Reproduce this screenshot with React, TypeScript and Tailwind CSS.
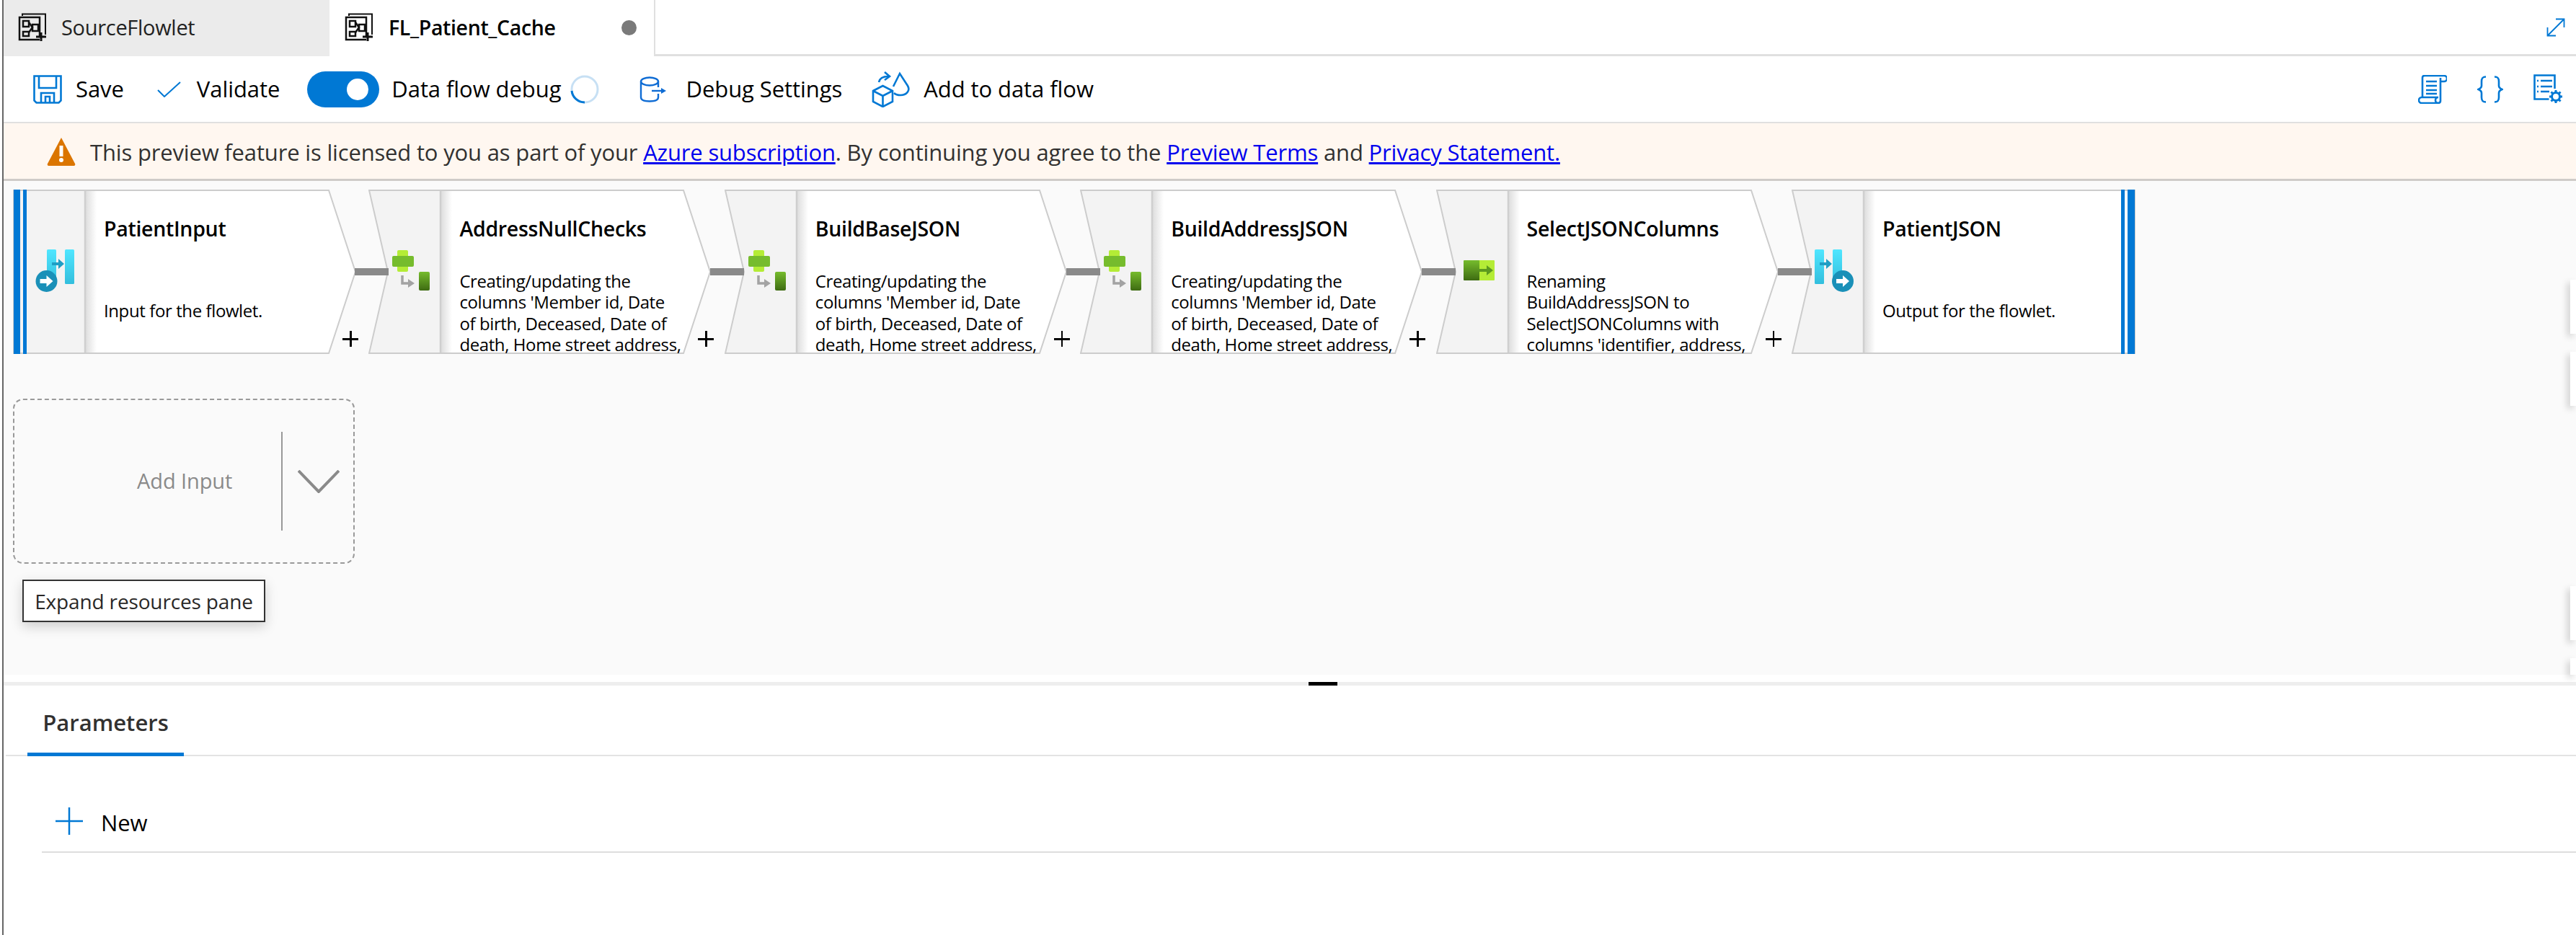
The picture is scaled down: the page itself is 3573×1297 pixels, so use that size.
import type { ReactNode } from 'react'

const NODE_H = 228

type Kind = 'input' | 'derive' | 'select' | 'output'

interface FlowNode {
  title: string
  lines: string[]
  kind: Kind
}

const derivedLines = [
  'Creating/updating the',
  "columns 'Member id, Date",
  'of birth, Deceased, Date of',
  'death, Home street address,',
]

const NODES: FlowNode[] = [
  { title: 'PatientInput', lines: ['Input for the flowlet.'], kind: 'input' },
  { title: 'AddressNullChecks', lines: derivedLines, kind: 'derive' },
  { title: 'BuildBaseJSON', lines: derivedLines, kind: 'derive' },
  { title: 'BuildAddressJSON', lines: derivedLines, kind: 'derive' },
  {
    title: 'SelectJSONColumns',
    lines: ['Renaming', 'BuildAddressJSON to', 'SelectJSONColumns with', "columns 'identifier, address,"],
    kind: 'select',
  },
  { title: 'PatientJSON', lines: ['Output for the flowlet.'], kind: 'output' },
]

function TabIcon() {
  return (
    <svg width="40" height="40" viewBox="0 0 40 40" fill="none" stroke="#111" strokeWidth="2.5" className="shrink-0">
      <path d="M6 4V1.500h32V30" strokeWidth="2" />
      <path d="M30 37H2V6h28v26" />
      <rect x="7" y="11" width="8" height="8" />
      <rect x="7" y="26" width="8" height="6" />
      <rect x="20" y="16" width="8" height="9" />
      <path d="M15 13l5 7-5 7" />
      <path d="M25 33h14M32 27v12" strokeWidth="3" />
    </svg>
  )
}

function SaveIcon() {
  return (
    <svg width="40" height="40" viewBox="0 0 40 40" fill="none" stroke="#0078d4" strokeWidth="2.6">
      <path d="M1.5 1.5h37v34l-3 3h-31l-3-3z" />
      <path d="M8 2v16h24V2" />
      <path d="M11 38V25h18v13M17 38v-8h6v8" />
    </svg>
  )
}

function DebugSettingsIcon() {
  return (
    <svg width="38" height="36" viewBox="0 0 38 36" fill="none" stroke="#0f6cd4" strokeWidth="2.4">
      <ellipse cx="14" cy="7" rx="12" ry="5.5" />
      <path d="M2 7v22c0 3.500 5 5.500 12 5.500S26 32.500 26 29v-5M26 7v8" />
      <path d="M17 20h14" />
      <path d="M30 16l7 4-7 4z" fill="#0f6cd4" stroke="none" />
    </svg>
  )
}

function AddToFlowIcon() {
  return (
    <svg width="54" height="50" viewBox="0 0 54 50" fill="none" stroke="#0078d4" strokeWidth="2.6">
      <path d="M2 27l13.500-7L29 27v15l-13.500 7L2 42z" />
      <path d="M2 27l13.500 7L29 27M15.500 34v15" />
      <path d="M30 21L39 3l11 17c4 7-2 13-10 13-4 0-7-1-9-3" />
      <path d="M10 15c1-5 5-8 13-8" />
      <path d="M18 1l7 6-7 5" />
    </svg>
  )
}

function ScriptIcon() {
  return (
    <svg width="40" height="40" viewBox="0 0 40 40" fill="none" stroke="#0078d4" strokeWidth="2.6">
      <path d="M6 31V4c0-2 1-3 3-3h27a3.500 3.500 0 0 1 0 8h-5" />
      <path d="M31 4v32c0 2-2 3-4 3H5a4 4 0 0 1 0-8h23a4 4 0 0 0 0 8" />
      <path d="M11 9h15M11 15h15M11 21h15M11 26h15" strokeWidth="2.400" />
    </svg>
  )
}

function BracesIcon() {
  return (
    <svg width="36" height="38" viewBox="0 0 36 38" fill="none" stroke="#0078d4" strokeWidth="2.6">
      <path d="M12 1.500C7 1.500 6 4 6 8v6c0 3-2 4-4.500 5C4 20 6 21 6 24v6c0 4 1 6.500 6 6.500" />
      <path d="M24 1.500c5 0 6 2.500 6 6.500v6c0 3 2 4 4.500 5-2.500 1-4.500 2-4.500 5v6c0 4-1 6.500-6 6.500" />
    </svg>
  )
}

function ListGearIcon() {
  return (
    <svg width="41" height="41" viewBox="0 0 41 41" fill="none" stroke="#0078d4" strokeWidth="2.6">
      <path d="M29.500 20V1.500h-28v33h20" />
      <path d="M10 9h16M10 17h16M10 24h12" />
      <path d="M5 9h2M5 17h2M5 24h2" />
      <circle cx="31" cy="31" r="5.500" strokeWidth="3" />
      <path d="M31 22v3M31 37v3M22 31h3M37 31h3M24.500 24.500l2 2M35.500 35.500l2 2M37.500 24.500l-2 2M26.500 35.500l-2 2" strokeWidth="3" />
    </svg>
  )
}

function ExpandIcon() {
  return (
    <svg width="26" height="26" viewBox="0 0 26 26" fill="none" stroke="#0078d4" strokeWidth="1.800">
      <path d="M2 24L24 2M13 1.500h11.500V13M1.500 13v11.500H13" />
    </svg>
  )
}

function WarningIcon() {
  return (
    <svg width="40" height="40" viewBox="0 0 40 40">
      <path d="M20 1L39 37a2 2 0 0 1-2 3H3a2 2 0 0 1-2-3z" fill="#db7500" />
      <rect x="17.500" y="12" width="5" height="15" fill="#fff" />
      <circle cx="20" cy="32" r="3" fill="#fff" />
    </svg>
  )
}

function NodeIcon({ kind }: { kind: Kind }) {
  if (kind === 'derive') {
    return (
      <svg className="absolute left-0 top-0" width="99" height="228" viewBox="0 0 99 228">
        <defs>
          <linearGradient id="derive-bar" x1="0" y1="0" x2="0" y2="1">
            <stop offset="0" stopColor="#76bc2d" />
            <stop offset="1" stopColor="#3e6b12" />
          </linearGradient>
        </defs>
        <rect x="40" y="84" width="15" height="30" rx="2" fill="#b4ec36" />
        <rect x="33" y="92" width="30" height="15" rx="2" fill="#76bc2d" />
        <path d="M47 119v11h10" fill="none" stroke="#a3a3a3" strokeWidth="3.500" />
        <path d="M55 124l9 6-9 6z" fill="#a3a3a3" />
        <rect x="70" y="114" width="15" height="26" rx="2" fill="url(#derive-bar)" />
      </svg>
    )
  }
  if (kind === 'select') {
    return (
      <svg className="absolute left-0 top-0" width="99" height="228" viewBox="0 0 99 228">
        <defs>
          <linearGradient id="select-bar" x1="0" y1="0" x2="0" y2="1">
            <stop offset="0" stopColor="#76bc2d" />
            <stop offset="1" stopColor="#3e6b12" />
          </linearGradient>
        </defs>
        <rect x="58" y="98" width="23" height="28" rx="1" fill="#b4ec36" />
        <rect x="38" y="98" width="22" height="28" rx="1" fill="url(#select-bar)" />
        <path d="M60 110h10v-5l9 7-9 7v-5H60z" fill="#5c9a1f" />
      </svg>
    )
  }
  const out = kind === 'output'
  const cx = out ? 71 : 46.5
  return (
    <svg className="absolute left-0 top-0" width="99" height="228" viewBox="0 0 99 228">
      <defs>
        <linearGradient id={`bar-${kind}`} x1="0" y1="0" x2="0" y2="1">
          <stop offset="0" stopColor="#50e6ff" />
          <stop offset="1" stopColor="#32bedd" />
        </linearGradient>
      </defs>
      <rect x={out ? 32 : 47} y="83" width="13" height="48" rx="1.500" fill={`url(#bar-${kind})`} />
      <rect x={out ? 57 : 72} y="83" width="13" height="48" rx="1.500" fill={`url(#bar-${kind})`} />
      <path
        d={out ? 'M39 101h9v-5l8 7-8 7v-5h-9z' : 'M54 101h9v-5l8 7-8 7v-5h-9z'}
        fill="#1f9ec4"
      />
      <circle cx={cx} cy="127" r="15" fill="#1a90b8" />
      <path
        d={`M${cx - 9} 124h9v-5l9 8-9 8v-5h-9z`}
        fill="#fff"
      />
    </svg>
  )
}

function NodeShape({ kind }: { kind: Kind }) {
  const h = NODE_H
  let white = `100,1 437,1 474,${h / 2} 437,${h - 1} 100,${h - 1}`
  let outline = `1,1 437,1 474,${h / 2} 437,${h - 1} 1,${h - 1} 27,${h / 2}`
  let gray = `1,1 100,1 100,${h - 1} 1,${h - 1} 27,${h / 2}`
  if (kind === 'input') {
    outline = `1,1 438,1 475,${h / 2} 438,${h - 1} 1,${h - 1}`
    white = `100,1 438,1 475,${h / 2} 438,${h - 1} 100,${h - 1}`
    gray = `1,1 100,1 100,${h - 1} 1,${h - 1}`
  }
  if (kind === 'output') {
    outline = `1,1 476,1 476,${h - 1} 1,${h - 1} 27,${h / 2}`
    white = `100,1 476,1 476,${h - 1} 100,${h - 1}`
  }
  return (
    <svg className="absolute left-0 top-0" width="480" height={h} viewBox={`0 0 480 ${h}`}>
      <defs>
        <linearGradient id={`fade-${kind}`} x1="0" y1="0" x2="1" y2="0">
          <stop offset="0" stopColor="#dcdcdc" />
          <stop offset="1" stopColor="#ffffff" />
        </linearGradient>
      </defs>
      <polygon points={white} fill="#fff" />
      <rect x="100" y="2" width="16" height={h - 4} fill={`url(#fade-${kind})`} />
      <polygon points={gray} fill="#f3f3f3" />
      <line x1="100" y1="1" x2="100" y2={h - 1} stroke="#cfcfcf" strokeWidth="2.500" />
      <polygon points={outline} fill="none" stroke="#cccccc" strokeWidth="2" />
    </svg>
  )
}

function PipelineNode({ node, last }: { node: FlowNode; last: boolean }) {
  const oneLine = node.lines.length === 1
  return (
    <div className="relative h-[228px] w-[493.4px] shrink-0 overflow-hidden font-['Open_Sans',sans-serif] text-black">
      <NodeShape kind={node.kind} />
      <NodeIcon kind={node.kind} />
      {node.kind === 'input' && (
        <>
          <div className="absolute left-[1px] top-0 h-full w-[9px] bg-[#0078d4]" />
          <div className="absolute left-[14px] top-0 h-full w-[5px] bg-[#0078d4]" />
        </>
      )}
      {node.kind === 'output' && (
        <>
          <div className="absolute left-[457px] top-0 h-full w-[5px] bg-[#0078d4]" />
          <div className="absolute left-[466px] top-0 h-full w-[10px] bg-[#0078d4]" />
        </>
      )}
      <div className="absolute left-[126px] top-0">
        <div className="mt-[36px] whitespace-nowrap text-[28.5px] font-semibold leading-[36px] tracking-[-0.3px]">{node.title}</div>
        <div className={`${oneLine ? 'mt-[81px]' : 'mt-[40px]'} whitespace-nowrap text-[24px] leading-[29.3px] tracking-[-0.4px]`}>
          {node.lines.map((line) => (
            <div key={line}>{line}</div>
          ))}
        </div>
      </div>
      {!last && (
        <div className="absolute left-[457px] top-[196px] h-[22px] w-[22px]">
          <div className="absolute left-0 top-[10px] h-[2.500px] w-full bg-black" />
          <div className="absolute left-[10px] top-0 h-full w-[2.500px] bg-black" />
        </div>
      )}
    </div>
  )
}

function ToolbarText({ children, className = '' }: { children: ReactNode; className?: string }) {
  return <span className={`whitespace-nowrap text-[31px] tracking-[-0.07px] text-black ${className}`}>{children}</span>
}

function SidePanel({ className }: { className: string }) {
  return <div className={`absolute right-0 w-[8px] bg-white shadow-[-4px_4px_10px_rgba(0,0,0,0.18)] ${className}`} />
}

export default function App() {
  return (
    <div className="h-[1297px] w-[3573px] overflow-hidden bg-white font-['Open_Sans',sans-serif]">
      <div className="ml-[3px] flex h-full flex-col border-l-2 border-[#666]">
        {/* tabs */}
        <div className="flex h-[78px] shrink-0">
          <div className="flex w-[452px] items-center gap-[20px] bg-[#ebebeb] pl-[20px] pb-[2px]">
            <TabIcon />
            <span className="text-[29px] tracking-[-0.3px] text-[#222]">SourceFlowlet</span>
          </div>
          <div className="flex w-[452px] items-center border-r-2 border-[#e0e0e0] pl-[21px] pb-[2px]">
            <TabIcon />
            <span className="ml-[21px] text-[28.5px] font-semibold tracking-[-0.35px] text-black">FL_Patient_Cache</span>
            <span className="ml-auto mr-[24px] h-[21px] w-[21px] rounded-full bg-[#7a7a7a]" />
          </div>
          <div className="flex flex-1 items-center justify-end border-b-[3px] border-[#e0e0e0] pr-[15px]">
            <ExpandIcon />
          </div>
        </div>

        {/* toolbar */}
        <div className="flex h-[93px] shrink-0 items-center border-b-2 border-[#e0e0e0] pl-[41px] pr-[18px]">
          <SaveIcon />
          <ToolbarText className="ml-[19px]">Save</ToolbarText>
          <svg className="ml-[46px]" width="33" height="22" viewBox="0 0 33 22" fill="none" stroke="#0078d4" strokeWidth="2">
            <path d="M1 12l9 9L32 1" />
          </svg>
          <ToolbarText className="ml-[22px]">Validate</ToolbarText>
          <div className="ml-[38px] flex h-[50px] w-[100px] items-center justify-end rounded-full bg-[#0078d4] pr-[15px]">
            <div className="h-[30px] w-[30px] rounded-full bg-white" />
          </div>
          <ToolbarText className="ml-[17px]">Data flow debug</ToolbarText>
          <svg className="ml-[13px]" width="40" height="40" viewBox="0 0 40 40" fill="none" strokeWidth="3">
            <circle cx="20" cy="20" r="18" stroke="#c7e0f4" />
            <path d="M20 38A18 18 0 0 1 2 22" stroke="#0078d4" />
          </svg>
          <div className="ml-[56px]">
            <DebugSettingsIcon />
          </div>
          <ToolbarText className="ml-[26px]">Debug Settings</ToolbarText>
          <div className="ml-[41px]">
            <AddToFlowIcon />
          </div>
          <ToolbarText className="ml-[18px]">Add to data flow</ToolbarText>
          <div className="ml-auto flex items-center">
            <ScriptIcon />
            <div className="ml-[42px]">
              <BracesIcon />
            </div>
            <div className="ml-[42px]">
              <ListGearIcon />
            </div>
          </div>
        </div>

        {/* preview banner */}
        <div className="flex h-[80px] shrink-0 items-center border-b-[3px] border-[#cfcbc8] bg-[#fff7f0] pl-[60px]">
          <WarningIcon />
          <p className="ml-[20px] whitespace-nowrap pt-[4px] text-[31px] tracking-[-0.17px] text-[#323130]">
            This preview feature is licensed to you as part of your{' '}
            <a className="text-[#0000ee] underline">Azure subscription</a>. By continuing you agree to the{' '}
            <a className="text-[#0000ee] underline">Preview Terms</a> and{' '}
            <a className="text-[#0000ee] underline">Privacy Statement.</a>
          </p>
        </div>

        {/* canvas */}
        <div className="relative h-[685px] shrink-0 bg-[#fafafa] pl-[13px] pt-[12px]">
          <div className="flex">
            {NODES.map((node, i) => (
              <div key={node.title} className="relative w-[493.4px] shrink-0">
                <PipelineNode node={node} last={i === NODES.length - 1} />
                {i < NODES.length - 1 && (
                  <div className="absolute left-[474px] top-[109px] z-10 h-[10px] w-[47px] bg-[#8a8a8a]" />
                )}
              </div>
            ))}
          </div>

          <div className="mt-[62px] flex h-[229px] w-[474px] items-center rounded-[14px] border-2 border-dashed border-[#999]">
            <span className="ml-[170px] mb-[2px] w-[200px] text-[29px] tracking-[-0.1px] text-[#8a8a8a]">Add Input</span>
            <div className="h-[137px] w-[2px] bg-[#999]" />
            <svg className="ml-[21px]" width="58" height="32" viewBox="0 0 58 32" fill="none" stroke="#8a8a8a" strokeWidth="4">
              <path d="M1 1l28 29L57 1" />
            </svg>
          </div>

          <div className="absolute left-[26px] top-[553px] flex h-[59px] w-[337px] items-center justify-center border-2 border-[#333] bg-white text-[28px] tracking-[-0.15px] text-[#292827] shadow-[0_6px_16px_rgba(0,0,0,0.18)]">
            Expand resources pane
          </div>

          <SidePanel className="top-[137px] h-[75px]" />
          <SidePanel className="top-[237px] h-[75px]" />
          <SidePanel className="top-[562px] h-[75px]" />
          <SidePanel className="top-[662px] h-[23px]" />
        </div>

        {/* resize handle */}
        <div className="mt-[10px] h-[5px] shrink-0 bg-[#eeeeee] pl-[1810px]">
          <div className="h-[5px] w-[40px] bg-black" />
        </div>

        {/* bottom panel */}
        <div className="ml-[3px] flex h-[98px] shrink-0 border-b-2 border-[#e3e3e3]">
          <div className="ml-[30px] flex h-[98px] w-[217px] items-center justify-center border-b-[5px] border-[#0078d4] pt-[10px] text-[31px] font-semibold tracking-[0px] text-[#323130]">
            Parameters
          </div>
        </div>
        <div className="ml-[53px] flex h-[134px] shrink-0 items-center border-b-2 border-[#dedede] pl-[19px] pt-[48px]">
          <svg width="38" height="38" viewBox="0 0 38 38" fill="none" stroke="#0078d4" strokeWidth="2.500">
            <path d="M19 0v38M0 19h38" />
          </svg>
          <ToolbarText className="ml-[25px] pt-[4px]">New</ToolbarText>
        </div>
      </div>
    </div>
  )
}
